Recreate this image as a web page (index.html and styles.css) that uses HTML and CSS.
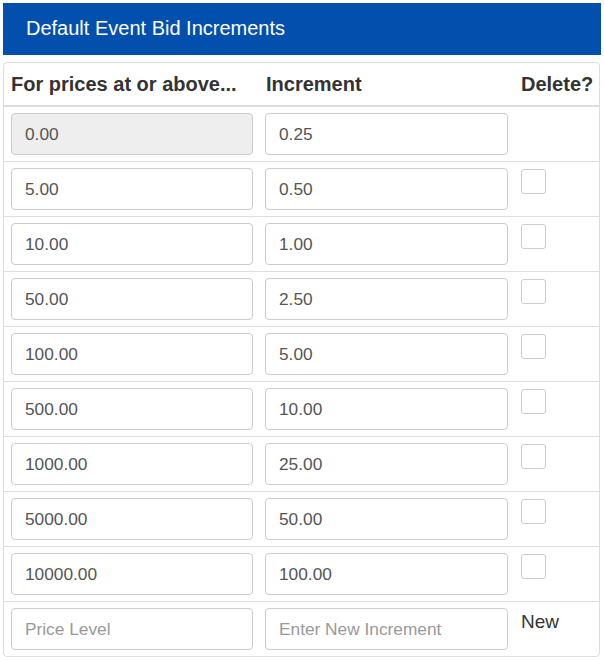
FILE: index.html
```html
<!DOCTYPE html>
<html lang="en">
<head>
    <meta charset="UTF-8">
    <title>Default Event Bid Increments</title>
    <link rel="stylesheet" href="styles.css">
</head>
<body>
    <div class="panel-heading">Default Event Bid Increments</div>

    <div class="increments">
        <div class="row head">
            <div class="cell">For prices at or above...</div>
            <div class="cell">Increment</div>
            <div class="cell">Delete?</div>
        </div>
        <div class="row">
            <div class="cell"><input type="text" value="0.00" disabled></div>
            <div class="cell"><input type="text" value="0.25"></div>
            <div class="cell"></div>
        </div>
        <div class="row">
            <div class="cell"><input type="text" value="5.00"></div>
            <div class="cell"><input type="text" value="0.50"></div>
            <div class="cell"><input type="checkbox"></div>
        </div>
        <div class="row">
            <div class="cell"><input type="text" value="10.00"></div>
            <div class="cell"><input type="text" value="1.00"></div>
            <div class="cell"><input type="checkbox"></div>
        </div>
        <div class="row">
            <div class="cell"><input type="text" value="50.00"></div>
            <div class="cell"><input type="text" value="2.50"></div>
            <div class="cell"><input type="checkbox"></div>
        </div>
        <div class="row">
            <div class="cell"><input type="text" value="100.00"></div>
            <div class="cell"><input type="text" value="5.00"></div>
            <div class="cell"><input type="checkbox"></div>
        </div>
        <div class="row">
            <div class="cell"><input type="text" value="500.00"></div>
            <div class="cell"><input type="text" value="10.00"></div>
            <div class="cell"><input type="checkbox"></div>
        </div>
        <div class="row">
            <div class="cell"><input type="text" value="1000.00"></div>
            <div class="cell"><input type="text" value="25.00"></div>
            <div class="cell"><input type="checkbox"></div>
        </div>
        <div class="row">
            <div class="cell"><input type="text" value="5000.00"></div>
            <div class="cell"><input type="text" value="50.00"></div>
            <div class="cell"><input type="checkbox"></div>
        </div>
        <div class="row">
            <div class="cell"><input type="text" value="10000.00"></div>
            <div class="cell"><input type="text" value="100.00"></div>
            <div class="cell"><input type="checkbox"></div>
        </div>
        <div class="row">
            <div class="cell"><input type="text" placeholder="Price Level"></div>
            <div class="cell"><input type="text" placeholder="Enter New Increment"></div>
            <div class="cell new-label">New</div>
        </div>
    </div>
</body>
</html>
```

FILE: styles.css
```css
body {
    font-family: "Liberation Sans", Arial, sans-serif;
    color: #333;
    background-color: white;
    margin: 3px;
}
.panel-heading {
    width: 600px;
    height: 52px;
    box-sizing: border-box;
    padding-left: 23px;
    background-color: #034fae;
    color: white;
    font-size: 20px;
    line-height: 51px;
}
.increments {
    width: 597px;
    margin-top: 7px;
    border: 1px solid #ddd;
    border-radius: 4px;
    box-sizing: border-box;
}
.row {
    display: grid;
    grid-template-columns: 242px 243px 1fr;
    column-gap: 12px;
    padding: 6px 0 6px 7px;
    border-top: 1px solid #ddd;
}
.row .cell:nth-child(3) {
    padding-left: 1px;
}
.row.head {
    border-top: none;
    border-bottom: 1px solid #ddd;
    padding: 0 0 0 7px;
    height: 42px;
    align-items: center;
    font-weight: bold;
    font-size: 20px;
}
.row.head .cell:nth-child(2) {
    padding-left: 1px;
}
input[type="text"] {
    display: block;
    width: 100%;
    height: 42px;
    box-sizing: border-box;
    padding: 0 13px;
    font-family: inherit;
    font-size: 17.3px;
    color: #555;
    background-color: white;
    border: 1px solid #ccc;
    border-radius: 4px;
}
input[type="text"]:disabled {
    background-color: #eee;
}
input::placeholder {
    color: #999;
}
input[type="checkbox"] {
    appearance: none;
    display: block;
    width: 25px;
    height: 25px;
    margin: 1px 0 0 0;
    border: 1px solid #ccc;
    border-radius: 3px;
    background-color: white;
}
.new-label {
    font-size: 19px;
    line-height: 27px;
}
```
